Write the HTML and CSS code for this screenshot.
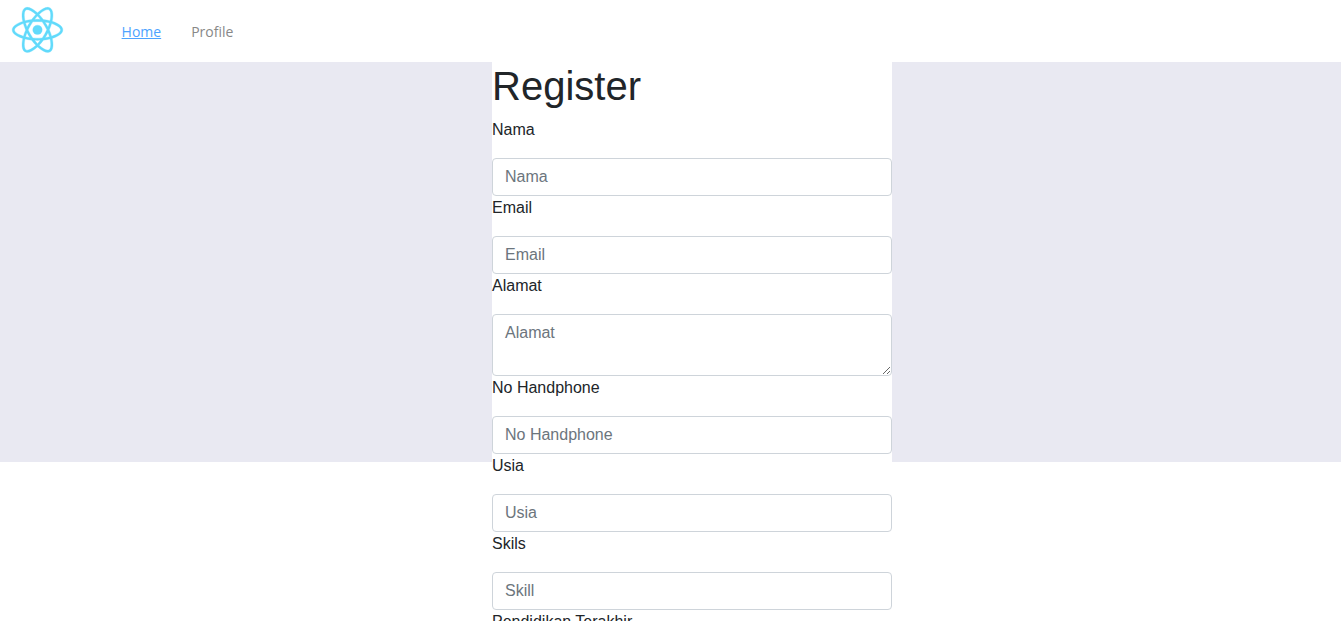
FILE: index.html
```html
<!DOCTYPE html>
<html lang="id">
<head>
<meta charset="utf-8">
<title>Register</title>
<link rel="stylesheet" href="styles.css">
</head>
<body>
<nav class="navbar">
  <svg class="logo" viewBox="0 0 841.9 595.3" fill="#61DAFB" aria-label="React"><path d="M666.3 296.5c0-32.5-40.7-63.3-103.1-82.4 14.4-63.6 8-114.2-20.2-130.4-6.5-3.8-14.1-5.6-22.4-5.6v22.3c4.6 0 8.3.9 11.4 2.6 13.6 7.8 19.5 37.5 14.9 75.7-1.1 9.4-2.9 19.3-5.1 29.4-19.6-4.8-41-8.5-63.5-10.9-13.5-18.5-27.5-35.3-41.6-50 32.6-30.3 63.2-46.9 84-46.9V78c-27.5 0-63.5 19.6-99.9 53.6-36.4-33.8-72.4-53.2-99.9-53.2v22.3c20.7 0 51.4 16.5 84 46.6-14 14.7-28 31.4-41.3 49.9-22.6 2.4-44 6.1-63.6 11-2.3-10-4-19.7-5.2-29-4.7-38.2 1.1-67.9 14.6-75.8 3-1.8 6.9-2.6 11.5-2.6V78.500c-8.400 0-16 1.800-22.600 5.600-28.100 16.200-34.400 66.700-19.900 130.100-62.200 19.200-102.700 49.900-102.700 82.300 0 32.500 40.700 63.300 103.100 82.400-14.400 63.600-8 114.200 20.200 130.400 6.500 3.800 14.100 5.600 22.500 5.600 27.500 0 63.500-19.600 99.900-53.600 36.400 33.800 72.400 53.200 99.900 53.200 8.400 0 16-1.800 22.600-5.600 28.100-16.200 34.400-66.700 19.900-130.100 62-19.100 102.500-49.900 102.500-82.300zm-130.200-66.700c-3.700 12.900-8.300 26.200-13.500 39.500-4.100-8-8.400-16-13.100-24-4.600-8-9.500-15.800-14.400-23.400 14.200 2.100 27.900 4.700 41 7.900zm-45.800 106.500c-7.800 13.500-15.800 26.300-24.100 38.200-14.900 1.300-30 2-45.200 2-15.100 0-30.200-.7-45-1.900-8.300-11.900-16.400-24.600-24.200-38-7.600-13.100-14.500-26.400-20.800-39.800 6.200-13.400 13.200-26.800 20.700-39.900 7.800-13.500 15.800-26.300 24.100-38.200 14.900-1.300 30-2 45.200-2 15.100 0 30.200.7 45 1.900 8.300 11.900 16.400 24.600 24.200 38 7.600 13.100 14.500 26.400 20.800 39.800-6.300 13.400-13.200 26.800-20.700 39.900zm32.300-13c5.400 13.400 10 26.800 13.800 39.800-13.100 3.200-26.900 5.900-41.200 8 4.900-7.700 9.800-15.600 14.400-23.700 4.600-8 8.900-16.100 13-24.100zM421.200 430c-9.300-9.600-18.600-20.300-27.800-32 9 .4 18.200.7 27.500.7 9.400 0 18.700-.2 27.800-.7-9 11.700-18.300 22.400-27.500 32zm-74.400-58.900c-14.200-2.100-27.900-4.700-41-7.900 3.700-12.900 8.300-26.200 13.500-39.500 4.100 8 8.400 16 13.100 24 4.700 8 9.500 15.800 14.400 23.400zM420.700 163c9.300 9.600 18.600 20.300 27.800 32-9-.4-18.200-.7-27.500-.7-9.400 0-18.700.2-27.800.7 9-11.700 18.300-22.400 27.500-32zm-74 58.900c-4.900 7.700-9.800 15.600-14.400 23.700-4.600 8-8.900 16-13 24-5.400-13.400-10-26.800-13.800-39.800 13.100-3.100 26.900-5.800 41.200-7.900zm-90.500 125.200c-35.400-15.100-58.300-34.900-58.300-50.600 0-15.700 22.900-35.600 58.300-50.600 8.600-3.700 18-7 27.700-10.100 5.700 19.600 13.200 40 22.500 60.900-9.200 20.800-16.600 41.100-22.200 60.600-9.900-3.100-19.300-6.500-28-10.200zM310 490c-13.600-7.800-19.500-37.500-14.900-75.700 1.100-9.400 2.900-19.300 5.100-29.400 19.600 4.800 41 8.500 63.500 10.900 13.500 18.500 27.500 35.300 41.600 50-32.600 30.300-63.200 46.900-84 46.900-4.500-.1-8.300-1-11.300-2.700zm237.200-76.200c4.700 38.200-1.100 67.900-14.600 75.800-3 1.800-6.900 2.600-11.500 2.600-20.700 0-51.400-16.500-84-46.600 14-14.700 28-31.400 41.300-49.900 22.600-2.400 44-6.100 63.600-11 2.300 10.100 4.100 19.800 5.200 29.100zm38.500-66.700c-8.600 3.700-18 7-27.700 10.100-5.700-19.600-13.200-40-22.500-60.900 9.200-20.800 16.600-41.100 22.200-60.600 9.900 3.100 19.300 6.500 28.100 10.200 35.400 15.100 58.300 34.900 58.300 50.600-.1 15.700-23 35.600-58.400 50.600z"/><circle cx="420.900" cy="296.500" r="45.700"/></svg>
  <a class="link active" href="#">Home</a>
  <a class="link" href="#">Profile</a>
</nav>
<main class="page">
  <form class="form">
    <h1>Register</h1>
    <label for="nama">Nama</label>
    <input id="nama" class="control" placeholder="Nama">
    <label for="email">Email</label>
    <input id="email" class="control" placeholder="Email">
    <label for="alamat">Alamat</label>
    <textarea id="alamat" class="control area" placeholder="Alamat"></textarea>
    <label for="hp">No Handphone</label>
    <input id="hp" class="control" placeholder="No Handphone">
    <label for="usia">Usia</label>
    <input id="usia" class="control" placeholder="Usia">
    <label for="skill">Skils</label>
    <input id="skill" class="control" placeholder="Skill">
    <label>Pendidikan Terakhir</label>
  </form>
</main>
</body>
</html>
```
FILE: styles.css
```css
* { box-sizing: border-box; }
html { overflow: hidden; }
body {
  margin: 0;
  height: 621px;
  overflow: hidden;
  background: #fff;
  color: #212529;
  font: 16px/24px "Liberation Sans", Arial, sans-serif;
}
.navbar {
  display: flex;
  align-items: center;
  height: 62px;
  background: #fff;
  font: 14px/20px "Open Sans", sans-serif;
}
.logo {
  flex: none;
  width: 87px;
  height: 62px;
  margin: -2px 40.6px 0 -6px;
  stroke: #61dafb;
  stroke-width: 3;
}
.link {
  margin: 2px 30px 0 0;
  color: #888;
  text-decoration: none;
}
.link.active {
  color: #4da3ff;
  text-decoration: underline;
}
.page {
  height: 400px;
  background: #e9e9f2;
}
.form {
  display: flex;
  flex-direction: column;
  width: 400px;
  margin-left: 492px;
  background: #fff;
}
h1 {
  margin: 0 0 8px;
  font-size: 40px;
  font-weight: 500;
  line-height: 48px;
}
label {
  height: 40px;
}
.control {
  width: 100%;
  height: 38px;
  padding: 6px 12px;
  border: 1px solid #ced4da;
  border-radius: 4px;
  background: #fff;
  color: #495057;
  font: inherit;
}
.control::placeholder { color: #6c757d; opacity: 1; }
.area { height: 62px; resize: vertical; }
```
